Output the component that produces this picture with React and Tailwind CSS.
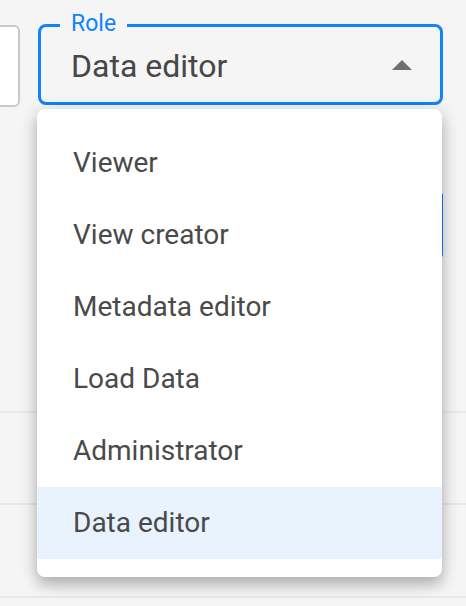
import { useState } from "react";

const roles = [
  "Viewer",
  "View creator",
  "Metadata editor",
  "Load Data",
  "Administrator",
  "Data editor",
];

function ArrowUp() {
  return (
    <svg width="20" height="10" viewBox="0 0 20 10" className="shrink-0">
      <polygon points="0,10 10,0 20,10" fill="#707070" />
    </svg>
  );
}

export default function App() {
  const [role, setRole] = useState("Data editor");

  return (
    <div className="relative w-[466px] h-[606px] overflow-hidden bg-[#f5f5f5] font-['Roboto',sans-serif]">
      {/* form row behind the menu */}
      <div className="flex items-start gap-[18px] pt-[24px]">
        <div className="w-[20px] h-[82px] mt-[1px] bg-white border-2 border-[#c9c9c9] rounded-r-[6px] border-l-0" />
        <div className="relative w-[405px] h-[81px] border-[3px] border-[#1283fb] rounded-[8px] flex items-center pl-[30px] pr-[28px]">
          <span className="absolute left-[19px] top-[-18px] px-[11px] bg-[#f5f5f5] text-[23px] leading-[30px] text-[#1283fb]">
            Role
          </span>
          <span className="flex-1 text-[32px] text-[#474747] leading-none mt-[2px]">{role}</span>
          <ArrowUp />
        </div>
      </div>

      <div className="flex justify-end mt-[85px] mr-[23px]">
        <div className="w-[60px] h-[66px] bg-[#1283fb] rounded-r-[4px]" />
      </div>

      <div className="mt-[153px] border-t-2 border-[#e9e9e9]" />
      <div className="mt-[90px] border-t-2 border-[#e9e9e9]" />
      <div className="mt-[91px] border-t-2 border-[#e9e9e9]" />

      {/* open dropdown */}
      <ul className="absolute left-[37px] top-[109px] w-[405px] py-[18px] bg-white rounded-[8px] shadow-[0_8px_14px_rgba(0,0,0,0.22),0_2px_20px_rgba(0,0,0,0.12)]">
        {roles.map((r) => (
          <li
            key={r}
            onClick={() => setRole(r)}
            className={`h-[72px] flex items-center pl-[36px] text-[28px] text-[#4a4a4a] ${
              r === role ? "bg-[#e9f3fd]" : ""
            }`}
          >
            {r}
          </li>
        ))}
      </ul>
    </div>
  );
}
